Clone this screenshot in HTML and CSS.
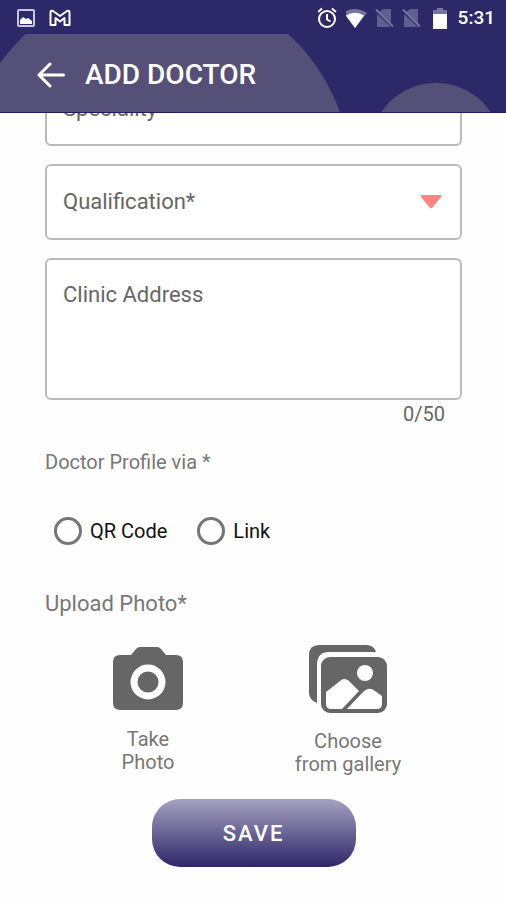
FILE: index.html
```
<!DOCTYPE html>
<html lang="en">

<head>
    <meta charset="UTF-8">
    <meta name="viewport" content="width=device-width, initial-scale=1.0">
    <title>Add Doctor</title>
    <link rel="stylesheet" href="styles.css">
</head>

<body>
    <header>
        <div class="status-bar">
            <div class="status-left">
                <svg width="18" height="18" viewBox="0 0 18 18">
                    <rect x="1" y="1" width="16" height="16" rx="1" fill="none" stroke="#c9c7dd" stroke-width="2" />
                    <path d="M3 15v-4l3-3 3 2 2-1 4 3v3z" fill="#fff" />
                </svg>
                <svg width="22" height="18" viewBox="0 0 22 18">
                    <path d="M1.500 16V3.500Q1.500 1 4 2L11 7 18 2Q20.500 1 20.500 3.500V16H15.500V9L11 12.500 6.500 9V16Z" fill="none" stroke="#fff" stroke-width="2" stroke-linejoin="round" />
                </svg>
            </div>
            <div class="status-right">
                <svg width="22" height="22" viewBox="0 0 22 22" fill="none" stroke="#fff" stroke-width="2">
                    <circle cx="9" cy="12" r="8" />
                    <path d="M9 7v5.500l3.500 2M0 5l4-3.500M18 5l-4-3.500" />
                </svg>
                <svg width="22" height="22" viewBox="0 0 22 22">
                    <path d="M-3 6Q8 -2 21 6L9 21Z" fill="#77749f" />
                    <path d="M0 8.500Q9 3 18 8.500L9 21Z" fill="#fff" />
                </svg>
                <svg width="22" height="22" viewBox="0 0 22 22">
                    <path d="M9 2h8v18H3V7z" fill="#625e90" />
                    <path d="M1 3l18 17" stroke="#2d2969" stroke-width="3" />
                    <path d="M2 2.500l17 17" stroke="#77749f" stroke-width="2" />
                </svg>
                <svg width="22" height="22" viewBox="0 0 22 22">
                    <path d="M8 2h8v18H2V7z" fill="#625e90" />
                    <path d="M0 3l18 17" stroke="#2d2969" stroke-width="3" />
                    <path d="M1 2.500l17 17" stroke="#77749f" stroke-width="2" />
                </svg>
                <svg width="22" height="22" viewBox="0 0 22 22">
                    <path d="M3 3h4V1h6v2h4v4H3z" fill="#77749f" />
                    <path d="M3 7h14v15H3z" fill="#fff" />
                </svg>
                <span class="time">5:31</span>
            </div>
        </div>
        <div class="app-bar">
            <button class="back-btn" type="button" aria-label="Back">
                <svg width="28" height="26" viewBox="0 0 28 26" fill="none" stroke="#fff" stroke-width="3" stroke-linecap="round" stroke-linejoin="round">
                    <path d="M13 2L2 13l11 11M2 13h24.500" />
                </svg>
            </button>
            <h1>ADD DOCTOR</h1>
        </div>
    </header>

    <form class="doctor-form">
        <input class="field" type="text" placeholder="Speciality" aria-label="Speciality">

        <div class="select-box">
            <select class="field" aria-label="Qualification">
                <option>Qualification*</option>
            </select>
            <svg class="arrow" width="22" height="14" viewBox="0 0 22 14">
                <path d="M2 0h18q2 0 1 2L12.500 12.500q-1.500 1.500-3 0L1 2Q0 0 2 0z" fill="#fd8585" />
            </svg>
        </div>

        <textarea class="field address" placeholder="Clinic Address" aria-label="Clinic Address" maxlength="50"></textarea>
        <p class="counter">0/50</p>

        <p class="profile-title">Doctor Profile via *</p>
        <div class="radio-group">
            <label><input type="radio" name="profile"> QR Code</label>
            <label><input type="radio" name="profile"> Link</label>
        </div>

        <p class="upload-title">Upload Photo*</p>
        <div class="upload">
            <button class="upload-btn" type="button">
                <svg width="72" height="68" viewBox="0 0 72 68">
                    <path d="M8 10h11l5-6q1.500-2 4-2h17q2.500 0 4 2l5 6h10q7 0 7 7v41q0 7-7 7H8q-7 0-7-7V17q0-7 7-7z" fill="#666" />
                    <circle cx="36" cy="37" r="14" fill="#666" stroke="#fff" stroke-width="7" />
                </svg>
                <span>Take<br>Photo</span>
            </button>
            <button class="upload-btn" type="button">
                <svg width="78" height="70" viewBox="0 0 78 70">
                    <path d="M8 58Q0 55 0 48V10Q0 0 10 0H57q8 0 10 7H20Q8 7 8 20Z" fill="#666" />
                    <rect x="12" y="12" width="66" height="56" rx="9" fill="#666" />
                    <circle cx="56" cy="28" r="8" fill="#fff" />
                    <path d="M17 47L31 36q4-4 9 0l10 10-17 18H22q-5 0-5-5z" fill="#fff" />
                    <path d="M38 64L54 47q6-6 12-1l7 5v8q0 5-5 5z" fill="#fff" />
                </svg>
                <span>Choose<br>from gallery</span>
            </button>
        </div>

        <button class="save-btn" type="button">SAVE</button>
    </form>
</body>

</html>
```
FILE: styles.css
```
* {
    box-sizing: border-box;
    margin: 0;
    padding: 0;
}

body {
    font-family: Roboto, sans-serif;
    background-color: #fefefe;
    color: #666;
}

button,
input,
select,
textarea {
    font-family: inherit;
}

header {
    position: sticky;
    top: 0;
    z-index: 10;
    background-color: #2d2969;
    color: #fff;
}

.status-bar {
    display: flex;
    justify-content: space-between;
    align-items: center;
    height: 34px;
    padding: 2px 11px 0 17px;
}

.status-left {
    display: flex;
    align-items: center;
    gap: 14px;
}

.status-right {
    display: flex;
    align-items: center;
    gap: 6px;
}

.time {
    font-size: 19px;
    font-weight: 500;
    line-height: 22px;
}

.app-bar {
    position: relative;
    display: flex;
    align-items: center;
    gap: 20px;
    height: 79px;
    padding: 3px 37px 0;
    overflow: hidden;
    border-bottom: 1px solid #211c62;
}

/* Header circles */
.app-bar::before,
.app-bar::after {
    content: "";
    position: absolute;
    border-radius: 50%;
    background-color: #545078;
}

.app-bar::before {
    top: -51px;
    left: -37px;
    width: 388px;
    height: 388px;
}

.app-bar::after {
    top: 49px;
    right: 4px;
    width: 132px;
    height: 132px;
}

.back-btn {
    display: flex;
    z-index: 1;
    background: none;
    border: none;
    cursor: pointer;
}

.app-bar h1 {
    z-index: 1;
    font-size: 28px;
    font-weight: 500;
    line-height: 32px;
}

.doctor-form {
    display: flex;
    flex-direction: column;
    /* The first field is scrolled under the header */
    margin-top: -43px;
    padding: 0 44px 32px 45px;
}

.field {
    display: block;
    width: 100%;
    height: 76px;
    margin-bottom: 18px;
    padding: 0 16px;
    background-color: #fff;
    color: #666;
    border: 2px solid #bbb;
    border-radius: 6px;
    font-size: 22px;
    line-height: 26px;
    outline: none;
}

.field::placeholder {
    color: #666;
    opacity: 1;
}

.select-box {
    position: relative;
}

.select-box .field {
    appearance: none;
}

.arrow {
    position: absolute;
    top: 31px;
    right: 20px;
    pointer-events: none;
}

.address {
    height: 142px;
    margin-bottom: 0;
    padding: 22px 16px;
    resize: none;
}

.counter {
    padding: 2px 17px 0 0;
    text-align: right;
    font-size: 20px;
    line-height: 24px;
}

.profile-title {
    margin-top: 24px;
    font-size: 20px;
    line-height: 24px;
    color: #777;
}

.radio-group {
    display: flex;
    gap: 30px;
    margin-top: 43px;
    padding-left: 9px;
}

.radio-group label {
    display: flex;
    align-items: center;
    gap: 8px;
    font-size: 20px;
    line-height: 28px;
    color: #111;
}

.radio-group input {
    appearance: none;
    width: 28px;
    height: 28px;
    border: 3px solid #757575;
    border-radius: 50%;
}

.radio-group input:checked {
    background: radial-gradient(#2d2969 50%, transparent 55%);
}

.upload-title {
    margin-top: 46px;
    font-size: 22px;
    line-height: 26px;
    color: #777;
}

.upload {
    display: grid;
    grid-template-columns: 1fr 1fr;
    margin-top: 28px;
    padding: 0 14px 0 3px;
}

.upload-btn {
    display: flex;
    flex-direction: column;
    align-items: center;
    gap: 15px;
    background: none;
    border: none;
    font-size: 20px;
    line-height: 23px;
    color: #777;
    cursor: pointer;
}

.save-btn {
    align-self: center;
    width: 204px;
    height: 68px;
    margin-top: 23px;
    border: none;
    border-radius: 28px;
    background: linear-gradient(#a5a2c2, #2d2669);
    color: #fff;
    font-size: 22px;
    font-weight: 500;
    letter-spacing: 2px;
    cursor: pointer;
}
```
